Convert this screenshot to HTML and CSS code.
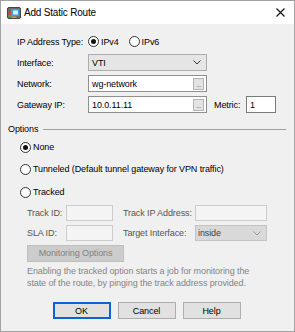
FILE: index.html
```html
<!DOCTYPE html>
<html lang="en">
<head>
    <meta charset="UTF-8">
    <title>Add Static Route</title>
    <link rel="stylesheet" href="styles.css">
</head>
<body>
    <div class="dialog">
        <!-- Title Bar -->
        <div class="titlebar">
            <svg class="app-icon" width="14" height="12" viewBox="0 0 14 12">
                <rect x="0.5" y="0.5" width="13" height="11" rx="1.5" fill="#6b6b6b" stroke="#444"/>
                <rect x="4" y="2" width="8.5" height="7" fill="#3a9de0"/>
                <rect x="6" y="3.5" width="5" height="4" fill="#d8f0ff"/>
                <rect x="1.5" y="5" width="2.5" height="2.5" fill="#e0402a"/>
                <rect x="1.5" y="8" width="2.5" height="2.5" fill="#3cb43c"/>
                <rect x="4.5" y="9.5" width="5" height="1.5" fill="#e89a2a"/>
            </svg>
            <span class="title">Add Static Route</span>
            <svg class="close" width="9" height="9" viewBox="0 0 9 9">
                <path d="M0.5 0.5 L8.5 8.5 M8.5 0.5 L0.5 8.5" stroke="#111" stroke-width="1.1"/>
            </svg>
        </div>

        <div class="dialog-body">
            <!-- Route Fields -->
            <div class="route-fields">
                <div class="form-row">
                    <span class="field-label">IP Address Type:</span>
                    <span class="radio"><span class="radio-dot checked"></span>IPv4</span>
                    <span class="radio radio-second"><span class="radio-dot"></span>IPv6</span>
                </div>
                <div class="form-row">
                    <span class="field-label">Interface:</span>
                    <div class="select">
                        <span>VTI</span>
                        <svg width="8" height="5" viewBox="0 0 8 5"><path d="M0.5 0.5 L4 4 L7.5 0.5" fill="none" stroke="#333" stroke-width="1"/></svg>
                    </div>
                </div>
                <div class="form-row">
                    <span class="field-label">Network:</span>
                    <div class="text-input">
                        <span>wg-network</span>
                        <span class="browse">...</span>
                    </div>
                </div>
                <div class="form-row">
                    <span class="field-label">Gateway IP:</span>
                    <div class="text-input">
                        <span>10.0.11.11</span>
                        <span class="browse">...</span>
                    </div>
                    <span class="metric-label">Metric:</span>
                    <div class="text-input metric-input"><span>1</span></div>
                </div>
            </div>

            <!-- Options -->
            <div class="options-header">
                <span>Options</span>
                <span class="rule"></span>
            </div>

            <div class="option-list">
                <span class="radio option"><span class="radio-dot checked"></span>None</span>
                <span class="radio option option-tunneled"><span class="radio-dot"></span>Tunneled (Default tunnel gateway for VPN traffic)</span>
                <span class="radio option option-tracked"><span class="radio-dot"></span>Tracked</span>
            </div>

            <div class="tracked-fields">
                <div class="track-row">
                    <span class="track-label">Track ID:</span>
                    <div class="disabled-input"></div>
                    <span class="track-label track-label-wide">Track IP Address:</span>
                    <div class="disabled-input wide"></div>
                </div>
                <div class="track-row">
                    <span class="track-label">SLA ID:</span>
                    <div class="disabled-input"></div>
                    <span class="track-label track-label-wide">Target Interface:</span>
                    <div class="disabled-select">
                        <span>inside</span>
                        <svg width="8" height="5" viewBox="0 0 8 5"><path d="M0.5 0.5 L4 4 L7.5 0.5" fill="none" stroke="#9a9a9a" stroke-width="1"/></svg>
                    </div>
                </div>
                <div class="monitor-button">Monitoring Options</div>
                <p class="hint">Enabling the tracked option starts a job for monitoring the<br>state of the route, by pinging the track address provided.</p>
            </div>

            <!-- Buttons -->
            <div class="button-row">
                <button class="btn btn-default">OK</button>
                <button class="btn">Cancel</button>
                <button class="btn">Help</button>
            </div>
        </div>
    </div>
</body>
</html>
```

FILE: styles.css
```css
/* Global Styles */
body {
    margin: 0;
    padding: 0;
    font-family: 'Liberation Sans', Arial, sans-serif;
    font-size: 9px;
    letter-spacing: -0.1px;
    color: #000;
    background: #f0f0f0;
}

.dialog {
    width: 295px;
    height: 332px;
    box-sizing: border-box;
    border: 1px solid #a3a3a3;
    background: #f0f0f0;
}

/* Title Bar */
.titlebar {
    height: 23px;
    background: #fff;
    display: flex;
    align-items: center;
    padding: 0 9px 0 6px;
}

.app-icon {
    margin-top: 1px;
}

.title {
    font-size: 10px;
    letter-spacing: -0.2px;
    margin-left: 3px;
    flex: 1;
}

.dialog-body {
    padding: 9px 8px 0 7px;
}

/* Route Fields */
.route-fields {
    padding-left: 9px;
}

.form-row {
    display: flex;
    align-items: center;
    height: 17px;
    margin-bottom: 4px;
}

.field-label {
    width: 71px;
}

.radio {
    display: flex;
    align-items: center;
}

.radio-dot {
    width: 9px;
    height: 9px;
    border: 1px solid #333;
    border-radius: 50%;
    background: #fff;
    margin-right: 2px;
    position: relative;
}

.radio-dot.checked::after {
    content: "";
    position: absolute;
    left: 2px;
    top: 2px;
    width: 5px;
    height: 5px;
    border-radius: 50%;
    background: #111;
}

.radio-second {
    margin-left: 10px;
}

.select,
.text-input {
    width: 119px;
    height: 17px;
    box-sizing: border-box;
    display: flex;
    align-items: center;
    justify-content: space-between;
    padding: 0 2px 0 3px;
}

.select {
    background: #e5e5e5;
    border: 1px solid #adadad;
    padding-right: 5px;
}

.text-input {
    background: #fff;
    border: 1px solid #8f8f8f;
}

.browse {
    width: 11px;
    height: 12px;
    box-sizing: border-box;
    background: #e3e3e3;
    border: 1px solid #b4b4b4;
    font-size: 7px;
    color: #666;
    line-height: 12px;
    text-align: center;
    letter-spacing: -0.5px;
    overflow: hidden;
}

.metric-label {
    margin-left: 7px;
    width: 32px;
}

.metric-input {
    width: 30px;
    border-color: #7a7a7a;
}

/* Options */
.options-header {
    display: flex;
    align-items: center;
    height: 12px;
    margin-top: 10px;
}

.rule {
    flex: 1;
    height: 1px;
    background: #a0a0a0;
    margin-left: 5px;
    margin-top: 1px;
}

.option-list {
    display: flex;
    flex-direction: column;
    padding-left: 12px;
}

.option {
    height: 12px;
    margin-top: 6px;
}

.option-tunneled {
    margin-top: 10px;
}

.option-tracked {
    margin-top: 11px;
}

/* Tracked Fields */
.tracked-fields {
    padding-left: 19px;
    margin-top: 7px;
}

.track-row {
    display: flex;
    align-items: center;
    height: 16px;
    margin-bottom: 4px;
}

.track-label {
    width: 39px;
    color: #555;
}

.track-label-wide {
    width: 72px;
    margin-left: 10px;
}

.disabled-input {
    width: 47px;
    height: 16px;
    box-sizing: border-box;
    border: 1px solid #cccccc;
    background: #f4f4f4;
}

.disabled-input.wide {
    width: 72px;
}

.disabled-select {
    width: 72px;
    height: 16px;
    box-sizing: border-box;
    border: 1px solid #c4c4c4;
    background: #d9d9d9;
    color: #444;
    display: flex;
    align-items: center;
    justify-content: space-between;
    padding: 0 5px 0 2px;
}

.monitor-button {
    width: 97px;
    height: 17px;
    box-sizing: border-box;
    margin-top: 1px;
    background: #cccccc;
    border: 1px solid #bfbfbf;
    color: #838383;
    text-align: center;
    line-height: 15px;
}

.hint {
    margin: 3px 0 0;
    line-height: 12px;
    color: #858585;
}

/* Buttons */
.button-row {
    display: flex;
    justify-content: center;
    gap: 7px;
    margin-top: 13px;
    padding-right: 1px;
}

.btn {
    width: 58px;
    height: 17px;
    box-sizing: border-box;
    font-family: 'Liberation Sans', Arial, sans-serif;
    font-size: 9px;
    letter-spacing: -0.1px;
    color: #000;
    background: #e1e1e1;
    border: 1px solid #adadad;
    padding: 0;
}

.btn-default {
    border: 2px solid #0a64d8;
}
```
